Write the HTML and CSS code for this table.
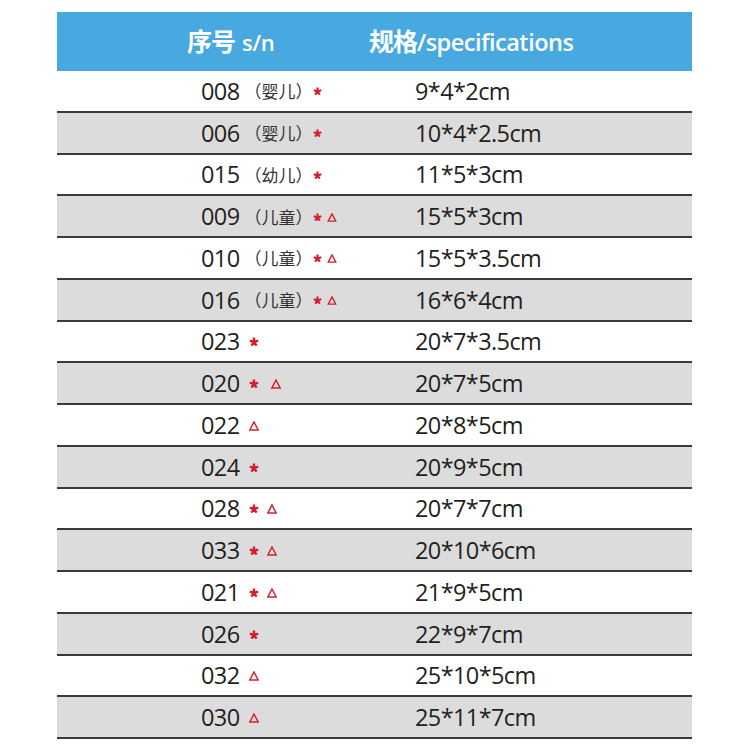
FILE: index.html
```html
<!DOCTYPE html>
<html>
<head>
<meta charset="utf-8">
<link rel="stylesheet" href="styles.css">
</head>
<body>
<div class="table">
  <div class="head">
    <div class="h1"><span class="cn">序号</span> <span class="en">s/n</span></div>
    <div class="h2"><span class="cn">规格</span><span class="en2">/specifications</span></div>
  </div>
  <div class="row"><div class="sn">008<span class="tag">（婴儿）</span><span class="m"><svg class="star" viewBox="0 0 10 10"><path d="M5 5L5 0.6M5 5L9.2 3.6M5 5L7.6 8.6M5 5L2.4 8.6M5 5L0.8 3.6"/></svg></span></div><div class="spec">9*4*2cm</div></div>
  <div class="row alt"><div class="sn">006<span class="tag">（婴儿）</span><span class="m"><svg class="star" viewBox="0 0 10 10"><path d="M5 5L5 0.6M5 5L9.2 3.6M5 5L7.6 8.6M5 5L2.4 8.6M5 5L0.8 3.6"/></svg></span></div><div class="spec">10*4*2.5cm</div></div>
  <div class="row"><div class="sn">015<span class="tag">（幼儿）</span><span class="m"><svg class="star" viewBox="0 0 10 10"><path d="M5 5L5 0.6M5 5L9.2 3.6M5 5L7.6 8.6M5 5L2.4 8.6M5 5L0.8 3.6"/></svg></span></div><div class="spec">11*5*3cm</div></div>
  <div class="row alt"><div class="sn">009<span class="tag">（儿童）</span><span class="m"><svg class="star" viewBox="0 0 10 10"><path d="M5 5L5 0.6M5 5L9.2 3.6M5 5L7.6 8.6M5 5L2.4 8.6M5 5L0.8 3.6"/></svg><svg class="tri" viewBox="0 0 10 10"><path d="M5 1L9.2 9H0.8Z"/></svg></span></div><div class="spec">15*5*3cm</div></div>
  <div class="row"><div class="sn">010<span class="tag">（儿童）</span><span class="m"><svg class="star" viewBox="0 0 10 10"><path d="M5 5L5 0.6M5 5L9.2 3.6M5 5L7.6 8.6M5 5L2.4 8.6M5 5L0.8 3.6"/></svg><svg class="tri" viewBox="0 0 10 10"><path d="M5 1L9.2 9H0.8Z"/></svg></span></div><div class="spec">15*5*3.5cm</div></div>
  <div class="row alt"><div class="sn">016<span class="tag">（儿童）</span><span class="m"><svg class="star" viewBox="0 0 10 10"><path d="M5 5L5 0.6M5 5L9.2 3.6M5 5L7.6 8.6M5 5L2.4 8.6M5 5L0.8 3.6"/></svg><svg class="tri" viewBox="0 0 10 10"><path d="M5 1L9.2 9H0.8Z"/></svg></span></div><div class="spec">16*6*4cm</div></div>
  <div class="row"><div class="sn">023<span class="m big"><svg class="star" viewBox="0 0 10 10"><path d="M5 5L5 0.6M5 5L9.2 3.6M5 5L7.6 8.6M5 5L2.4 8.6M5 5L0.8 3.6"/></svg></span></div><div class="spec">20*7*3.5cm</div></div>
  <div class="row alt"><div class="sn">020<span class="m big wide"><svg class="star" viewBox="0 0 10 10"><path d="M5 5L5 0.6M5 5L9.2 3.6M5 5L7.6 8.6M5 5L2.4 8.6M5 5L0.8 3.6"/></svg><svg class="tri" viewBox="0 0 10 10"><path d="M5 1L9.2 9H0.8Z"/></svg></span></div><div class="spec">20*7*5cm</div></div>
  <div class="row"><div class="sn">022<span class="m big"><svg class="tri" viewBox="0 0 10 10"><path d="M5 1L9.2 9H0.8Z"/></svg></span></div><div class="spec">20*8*5cm</div></div>
  <div class="row alt"><div class="sn">024<span class="m big"><svg class="star" viewBox="0 0 10 10"><path d="M5 5L5 0.6M5 5L9.2 3.6M5 5L7.6 8.6M5 5L2.4 8.6M5 5L0.8 3.6"/></svg></span></div><div class="spec">20*9*5cm</div></div>
  <div class="row"><div class="sn">028<span class="m big"><svg class="star" viewBox="0 0 10 10"><path d="M5 5L5 0.6M5 5L9.2 3.6M5 5L7.6 8.6M5 5L2.4 8.6M5 5L0.8 3.6"/></svg><svg class="tri" viewBox="0 0 10 10"><path d="M5 1L9.2 9H0.8Z"/></svg></span></div><div class="spec">20*7*7cm</div></div>
  <div class="row alt"><div class="sn">033<span class="m big"><svg class="star" viewBox="0 0 10 10"><path d="M5 5L5 0.6M5 5L9.2 3.6M5 5L7.6 8.6M5 5L2.4 8.6M5 5L0.8 3.6"/></svg><svg class="tri" viewBox="0 0 10 10"><path d="M5 1L9.2 9H0.8Z"/></svg></span></div><div class="spec">20*10*6cm</div></div>
  <div class="row"><div class="sn">021<span class="m big"><svg class="star" viewBox="0 0 10 10"><path d="M5 5L5 0.6M5 5L9.2 3.6M5 5L7.6 8.6M5 5L2.4 8.6M5 5L0.8 3.6"/></svg><svg class="tri" viewBox="0 0 10 10"><path d="M5 1L9.2 9H0.8Z"/></svg></span></div><div class="spec">21*9*5cm</div></div>
  <div class="row alt"><div class="sn">026<span class="m big"><svg class="star" viewBox="0 0 10 10"><path d="M5 5L5 0.6M5 5L9.2 3.6M5 5L7.6 8.6M5 5L2.4 8.6M5 5L0.8 3.6"/></svg></span></div><div class="spec">22*9*7cm</div></div>
  <div class="row"><div class="sn">032<span class="m big"><svg class="tri" viewBox="0 0 10 10"><path d="M5 1L9.2 9H0.8Z"/></svg></span></div><div class="spec">25*10*5cm</div></div>
  <div class="row alt"><div class="sn">030<span class="m big"><svg class="tri" viewBox="0 0 10 10"><path d="M5 1L9.2 9H0.8Z"/></svg></span></div><div class="spec">25*11*7cm</div></div>
</div>
</body>
</html>
```

FILE: styles.css
```css
html, body {
  margin: 0;
  padding: 0;
  background: #ffffff;
}
body {
  font-family: "Open Sans", "Noto Sans CJK SC", sans-serif;
  color: #231f20;
}
.table {
  margin: 12px 0 0 57px;
  width: 635px;
}
.head {
  height: 59px;
  background: #47a9e0;
  color: #ffffff;
  display: flex;
  align-items: center;
  box-sizing: border-box;
  padding-bottom: 4px;
}
.h1 {
  width: 182px;
  padding-left: 130px;
  display: flex;
  align-items: baseline;
  gap: 7px;
}
.h2 {
  display: flex;
  align-items: baseline;
}
.cn {
  font-family: "Noto Sans CJK SC", sans-serif;
  font-weight: 700;
  font-size: 25px;
  letter-spacing: -1px;
}
.en {
  font-size: 22px;
  font-weight: 600;
  letter-spacing: -0.3px;
}
.en2 {
  font-size: 23.5px;
  font-weight: 600;
  letter-spacing: -0.5px;
}
.row {
  height: 41.75px;
  box-sizing: border-box;
  border-bottom: 2px solid #3a3a3a;
  display: flex;
  align-items: center;
  padding-left: 144px;
  font-size: 23.5px;
  letter-spacing: -0.6px;
  background: #ffffff;
}
.row.alt {
  background: #dcdcdc;
}
.sn {
  width: 214px;
  display: flex;
  align-items: center;
}
.tag {
  font-family: "Noto Sans CJK SC", sans-serif;
  font-size: 17px;
  margin-left: 5px;
  letter-spacing: 0;
  color: #333;
}
.m {
  display: flex;
  align-items: center;
  gap: 5px;
  margin-left: 0;
  padding-top: 2px;
}
.m.big {
  margin-left: 9px;
  gap: 8px;
}
.m.wide {
  gap: 12px;
}
.star {
  width: 9px;
  height: 9px;
  stroke: #d4202c;
  stroke-width: 2.4;
  fill: none;
}
.big .star {
  width: 10px;
  height: 10px;
}
.tri {
  width: 10px;
  height: 9px;
  stroke: #d4202c;
  stroke-width: 1.5;
  fill: none;
}
.big .tri {
  width: 10px;
  height: 10px;
}
.spec {
  color: #231f20;
}
```
